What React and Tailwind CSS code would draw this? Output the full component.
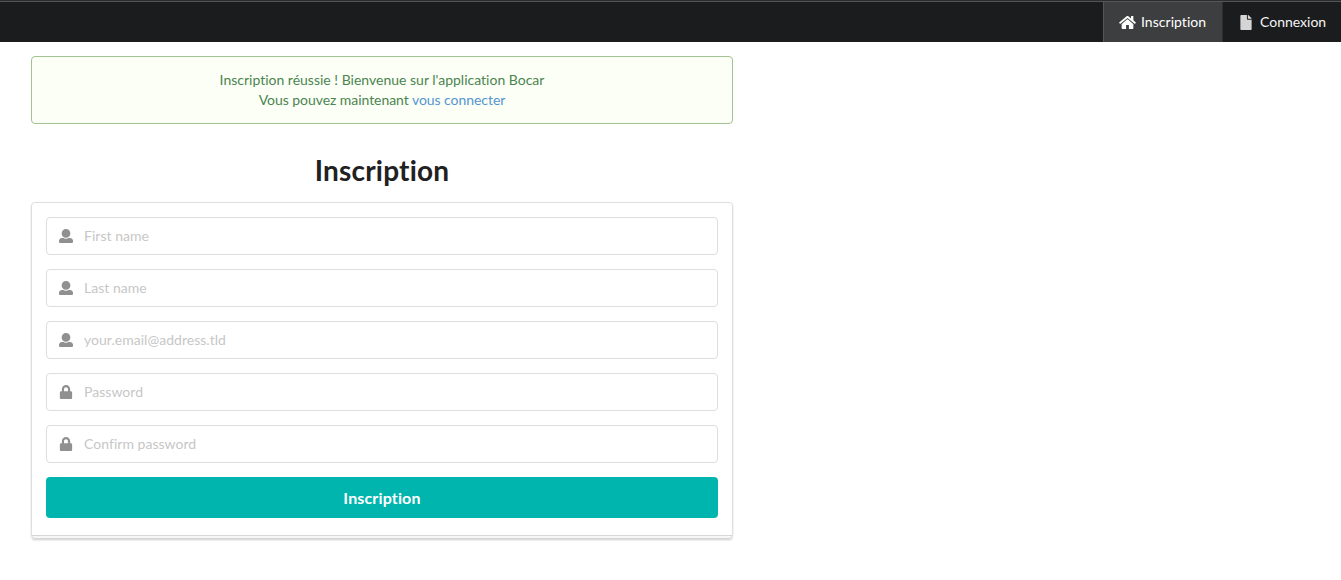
import { FaFile, FaLock } from "react-icons/fa";

function HomeIcon() {
  return (
    <svg viewBox="0 0 576 512" fill="currentColor" className="h-[15px] w-[17px]">
      <path d="M488 312.7V456c0 13.3-10.7 24-24 24H348c-6.6 0-12-5.4-12-12V356c0-6.6-5.4-12-12-12h-72c-6.6 0-12 5.4-12 12v112c0 6.6-5.4 12-12 12H112c-13.3 0-24-10.7-24-24V312.7c0-3.6 1.6-7 4.4-9.3l188-154.8c4.4-3.6 10.8-3.6 15.3 0l188 154.8c2.7 2.3 4.3 5.7 4.3 9.3zm83.6-60.9L488 182.9V44.4c0-6.6-5.4-12-12-12h-56c-6.6 0-12 5.4-12 12V117l-89.5-73.7c-17.7-14.6-43.3-14.6-61 0L4.4 251.8c-5.1 4.2-5.8 11.8-1.6 16.9l25.5 31c4.2 5.1 11.8 5.8 16.9 1.6l235.2-193.7c4.4-3.6 10.8-3.6 15.3 0l235.2 193.7c5.1 4.2 12.7 3.5 16.9-1.6l25.5-31c4.2-5.2 3.4-12.7-1.7-16.9z" />
    </svg>
  );
}

function UserIcon() {
  return (
    <svg viewBox="0 0 512 512" fill="currentColor" className="size-[14px]">
      <path d="M256 0c88.366 0 160 71.634 160 160s-71.634 160-160 160S96 248.366 96 160 167.634 0 256 0zm183.283 333.821l-71.313-17.828c-74.923 53.89-165.738 41.864-223.94 0l-71.313 17.828C29.981 344.505 0 382.903 0 426.955V464c0 26.51 21.49 48 48 48h416c26.51 0 48-21.49 48-48v-37.045c0-44.052-29.981-82.45-72.717-93.134z" />
    </svg>
  );
}

const fields = [
  { placeholder: "First name", type: "text", icon: "user" },
  { placeholder: "Last name", type: "text", icon: "user" },
  { placeholder: "your.email@address.tld", type: "email", icon: "user" },
  { placeholder: "Password", type: "password", icon: "lock" },
  { placeholder: "Confirm password", type: "password", icon: "lock" },
];

function Field({ placeholder, type, icon }) {
  return (
    <label className="flex h-[38px] items-center rounded-[4px] border border-[#dededf] bg-white">
      <span className="flex w-[37px] justify-center text-[#909090]">
        {icon === "user" ? <UserIcon /> : <FaLock className="size-[14px]" />}
      </span>
      <input
        type={type}
        placeholder={placeholder}
        className="min-w-0 flex-1 bg-transparent pb-[2px] text-[14px] leading-[17px] tracking-[0.03px] [font-variant-ligatures:normal] outline-none placeholder:text-[#c7c7c7]"
      />
    </label>
  );
}

export default function App() {
  return (
    <div className="min-h-[580px] bg-white font-[Lato,sans-serif] text-[14px] leading-[20px] text-[#212121] [font-variant-ligatures:none]">
      <nav className="flex h-[42px] justify-end border-t border-[#2b2c2d] bg-[#1b1c1d] text-[#f4f4f4] shadow-[inset_0_1px_0_#545556]">
        <a className="mt-px flex w-[119px] items-center border-l border-[#545556] bg-[#3d3e3f] pl-[15px] text-white">
          <HomeIcon />
          <span className="ml-[5px] tracking-[0.04px]">Inscription</span>
        </a>
        <a className="mt-px flex w-[119px] items-center border-l border-[#2d2e2f] pl-[17px]">
          <FaFile className="h-[15px] w-[12px] text-[#d5d5d5]" />
          <span className="ml-[8px]">Connexion</span>
        </a>
      </nav>
      <main className="ml-[31px] w-[702px] pt-[14px]">
        <div className="h-[68px] rounded-[4px] border border-[#a3c293] bg-[#fcfff5] pt-[13px] text-center text-[#4b8451]">
          <p>Inscription réussie ! Bienvenue sur l'application Bocar</p>
          <p className="tracking-[-0.05px]">
            Vous pouvez maintenant <a className="text-[#5495d2]">vous connecter</a>
          </p>
        </div>
        <h2 className="mt-[28px] text-center text-[28px] leading-[36px] font-bold tracking-[0.2px]">Inscription</h2>
        <form className="relative mt-[14px] flex h-[337px] flex-col gap-[14px] rounded-[4px] border border-[#dededf] p-[14px] shadow-[0_1px_2px_0_rgba(34,36,38,0.15)] after:absolute after:-bottom-[3px] after:left-0 after:h-[6px] after:w-full after:border-t after:border-[rgba(34,36,38,0.15)] after:bg-[rgba(0,0,0,0.03)]">
          {fields.map((field) => (
            <Field key={field.placeholder} {...field} />
          ))}
          <button
            type="button"
            className="h-[41px] shrink-0 rounded-[4px] bg-[#00b5ad] text-[16px] leading-[16px] font-bold tracking-[0.15px] text-white"
          >
            Inscription
          </button>
        </form>
      </main>
    </div>
  );
}
